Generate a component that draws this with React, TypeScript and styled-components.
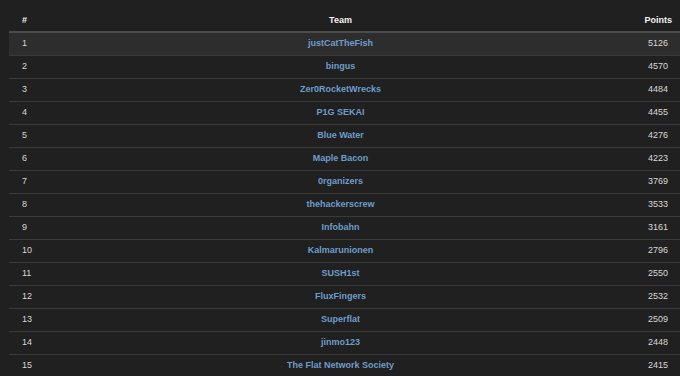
import styled, { createGlobalStyle } from 'styled-components';

const GlobalStyle = createGlobalStyle`
  html, body {
    margin: 0;
    padding: 0;
    background: #202020;
  }
  body {
    font-family: 'Liberation Sans', Arial, sans-serif;
    overflow: hidden;
  }
`;

const Page = styled.div`
  width: 680px;
  height: 376px;
  padding-left: 9px;
  box-sizing: border-box;
  background: #202020;
`;

const Table = styled.table`
  width: 671px;
  border-collapse: collapse;
  table-layout: fixed;
  font-size: 9px;
  line-height: 11px;
`;

type Align = 'left' | 'center' | 'right';

const HeadCell = styled.th<{ align: Align; width?: number }>`
  text-align: ${({ align }) => align};
  width: ${({ width }) => (width ? `${width}px` : 'auto')};
  color: #f2f2f2;
  font-weight: 700;
  padding: 15px ${({ align }) => (align === 'right' ? '8px' : '13px')} 5px 13px;
  border-bottom: 2px solid #4c4c4c;
  vertical-align: bottom;
`;

const Row = styled.tr<{ highlighted?: boolean }>`
  background: ${({ highlighted }) => (highlighted ? '#2d2d2d' : 'transparent')};
  border-bottom: 1px solid #3a3a3a;
`;

const Cell = styled.td<{ align: Align }>`
  text-align: ${({ align }) => align};
  color: #d8d8d8;
  padding: 5px ${({ align }) => (align === 'right' ? '12px' : '13px')} 6px 13px;
`;

const TeamLink = styled.a`
  color: #6e9dca;
  font-weight: 700;
  text-decoration: none;
`;

const teams: [string, number][] = [
  ['justCatTheFish', 5126],
  ['bingus', 4570],
  ['Zer0RocketWrecks', 4484],
  ['P1G SEKAI', 4455],
  ['Blue Water', 4276],
  ['Maple Bacon', 4223],
  ['0rganizers', 3769],
  ['thehackerscrew', 3533],
  ['Infobahn', 3161],
  ['Kalmarunionen', 2796],
  ['SUSH1st', 2550],
  ['FluxFingers', 2532],
  ['Superflat', 2509],
  ['jinmo123', 2448],
  ['The Flat Network Society', 2415],
];

export default function App() {
  return (
    <Page>
      <GlobalStyle />
      <Table>
        <thead>
          <tr>
            <HeadCell align="left" width={70}>#</HeadCell>
            <HeadCell align="center">Team</HeadCell>
            <HeadCell align="right" width={83}>Points</HeadCell>
          </tr>
        </thead>
        <tbody>
          {teams.map(([name, points], i) => (
            <Row key={name} highlighted={i === 0}>
              <Cell align="left">{i + 1}</Cell>
              <Cell align="center">
                <TeamLink href="#">{name}</TeamLink>
              </Cell>
              <Cell align="right">{points}</Cell>
            </Row>
          ))}
        </tbody>
      </Table>
    </Page>
  );
}
